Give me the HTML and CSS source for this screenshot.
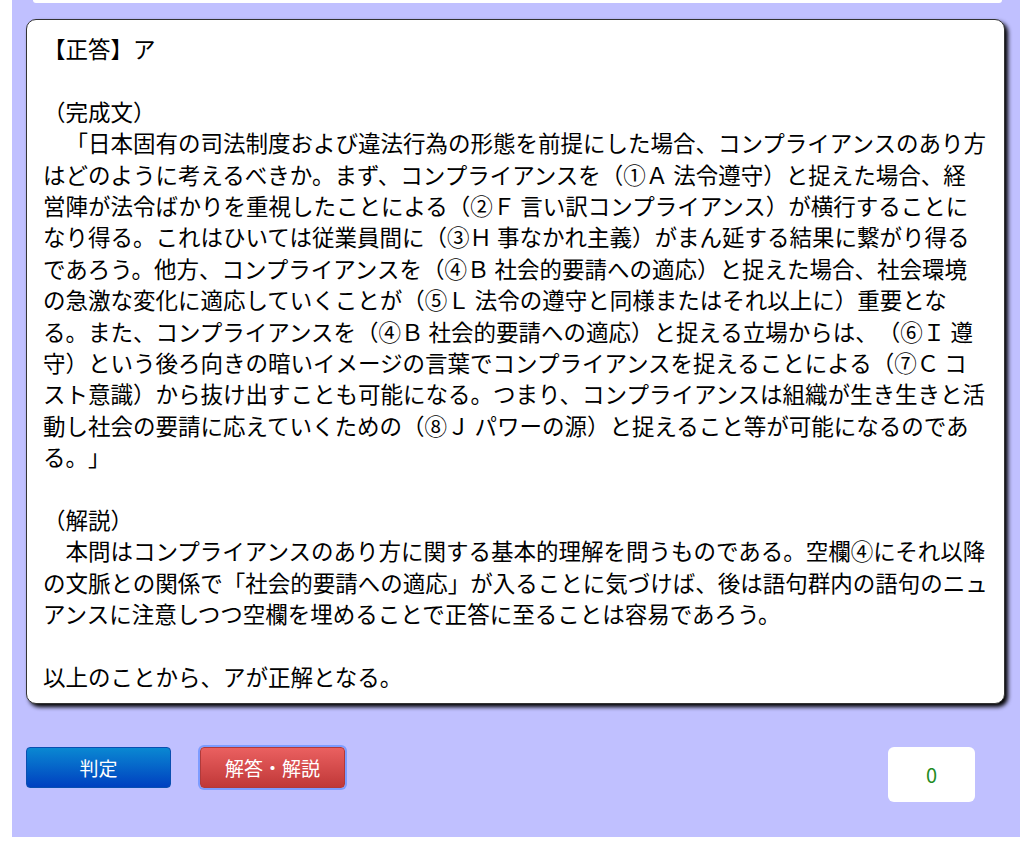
FILE: index.html
```html
<!DOCTYPE html>
<html lang="ja">
<head>
  <meta charset="utf-8">
  <title>解答・解説</title>
  <link rel="stylesheet" href="styles.css">
</head>
<body>
  <div class="page">
    <div class="prev-card"></div>

    <div class="answer-card">
      <p>【正答】ア</p>

      <p class="section-label">（完成文）</p>
      <p>　「日本固有の司法制度および違法行為の形態を前提にした場合、コンプライアンスのあり方<br>はどのように考えるべきか。まず、コンプライアンスを（①Ａ 法令遵守）と捉えた場合、経<br>営陣が法令ばかりを重視したことによる（②Ｆ 言い訳コンプライアンス）が横行することに<br>なり得る。これはひいては従業員間に（③Ｈ 事なかれ主義）がまん延する結果に繋がり得る<br>であろう。他方、コンプライアンスを（④Ｂ 社会的要請への適応）と捉えた場合、社会環境<br>の急激な変化に適応していくことが（⑤Ｌ 法令の遵守と同様またはそれ以上に）重要とな<br>る。また、コンプライアンスを（④Ｂ 社会的要請への適応）と捉える立場からは、（⑥Ｉ 遵<br>守）という後ろ向きの暗いイメージの言葉でコンプライアンスを捉えることによる（⑦Ｃ コ<br>スト意識）から抜け出すことも可能になる。つまり、コンプライアンスは組織が生き生きと活<br>動し社会の要請に応えていくための（⑧Ｊ パワーの源）と捉えること等が可能になるのであ<br>る。」</p>

      <p class="section-label">（解説）</p>
      <p>　本問はコンプライアンスのあり方に関する基本的理解を問うものである。空欄④にそれ以降<br>の文脈との関係で「社会的要請への適応」が入ることに気づけば、後は語句群内の語句のニュ<br>アンスに注意しつつ空欄を埋めることで正答に至ることは容易であろう。</p>

      <p class="section-label">以上のことから、アが正解となる。</p>
    </div>

    <div class="button-row">
      <button class="btn btn-judge">判定</button>
      <button class="btn btn-answer">解答・解説</button>
      <div class="score">0</div>
    </div>
  </div>
</body>
</html>
```

FILE: styles.css
```css
:root {
  --page-bg: #c0c0ff;
  --text: #000000;
  --card-border: #333333;
  --score-green: #228b22;
}

body {
  margin: 0;
  background: #ffffff;
  font-family: "Noto Sans CJK JP", "Noto Sans", sans-serif;
  color: var(--text);
}

.page {
  margin-left: 12px;
  width: 1008px;
  background: var(--page-bg);
  padding-bottom: 35px;
}

.prev-card {
  height: 3px;
  margin: 0 18px 0 21px;
  background: #ffffff;
  border-radius: 0 0 6px 6px;
}

.answer-card {
  margin: 16px 0 0 14px;
  width: 979px;
  box-sizing: border-box;
  padding: 13px 12px 11px 16px;
  background: #ffffff;
  border: 1px solid var(--card-border);
  border-radius: 10px;
  box-shadow: 3px 3px 4px #000000;
  font-size: 22.5px;
  line-height: 31.4px;
  white-space: nowrap;
  text-spacing-trim: space-all;
}

.answer-card p {
  margin: 0;
}

.answer-card .section-label {
  margin-top: 31.4px;
}

.button-row {
  display: flex;
  align-items: flex-start;
  margin-top: 43px;
  padding: 0 45px 0 14px;
}

.btn {
  height: 41px;
  border-radius: 4px;
  font-family: "Noto Sans CJK JP", "Noto Sans", sans-serif;
  font-size: 19px;
  color: #ffffff;
  cursor: pointer;
}

.btn-judge {
  width: 145px;
  border: 1px solid #0a4fb0;
  background: linear-gradient(#0a88d2, #0040c0);
}

.btn-answer {
  width: 145px;
  margin-left: 29px;
  border: 1px solid #b03a3a;
  background: linear-gradient(#ea6060, #c03838);
  box-shadow: 0 0 0 2px #7d9cff;
}

.score {
  margin-left: auto;
  width: 87px;
  height: 55px;
  display: flex;
  align-items: center;
  justify-content: center;
  background: #ffffff;
  border-radius: 6px;
  font-size: 20px;
  color: var(--score-green);
}
```
